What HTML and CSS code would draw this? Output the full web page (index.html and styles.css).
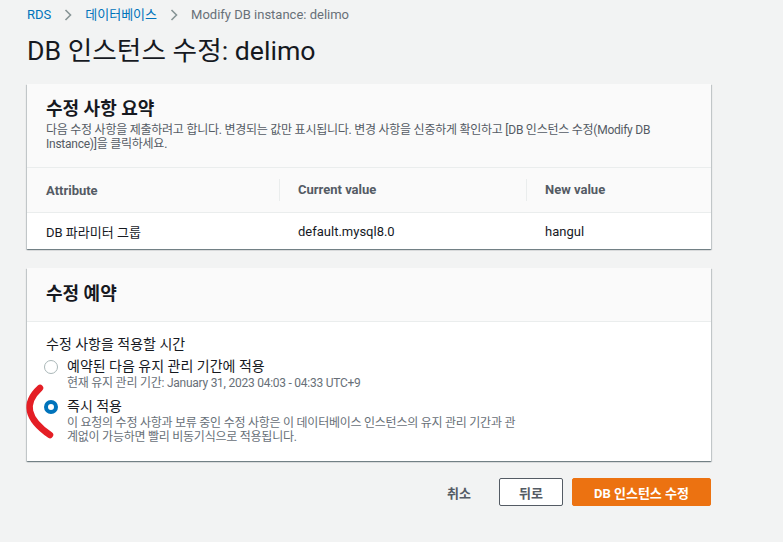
FILE: index.html
```html
<!DOCTYPE html>
<html lang="ko">
<head>
<meta charset="utf-8">
<title>Modify DB instance</title>
<link rel="stylesheet" href="styles.css">
</head>
<body>
<div class="page">
  <nav class="crumbs">
    <a class="crumb-link">RDS</a>
    <svg class="chev" width="8" height="12" viewBox="0 0 8 12"><path d="M1.5 1 L6.5 6 L1.5 11" fill="none" stroke="#879596" stroke-width="1.6"/></svg>
    <a class="crumb-link">데이터베이스</a>
    <svg class="chev" width="8" height="12" viewBox="0 0 8 12"><path d="M1.5 1 L6.5 6 L1.5 11" fill="none" stroke="#879596" stroke-width="1.6"/></svg>
    <span class="crumb-current">Modify DB instance: delimo</span>
  </nav>
  <h1 class="title">DB 인스턴스 수정: delimo</h1>

  <section class="card">
    <div class="card-head">
      <h2 class="card-title">수정 사항 요약</h2>
      <p class="card-desc">다음 수정 사항을 제출하려고 합니다. 변경되는 값만 표시됩니다. 변경 사항을 신중하게 확인하고 [DB 인스턴스 수정(Modify DB Instance)]을 클릭하세요.</p>
    </div>
    <div class="table">
      <div class="trow thead">
        <div class="cell">Attribute</div>
        <div class="cell sep">Current value</div>
        <div class="cell sep">New value</div>
      </div>
      <div class="trow tbody">
        <div class="cell">DB 파라미터 그룹</div>
        <div class="cell">default.mysql8.0</div>
        <div class="cell">hangul</div>
      </div>
    </div>
  </section>

  <section class="card card2">
    <div class="card-head head2">
      <h2 class="card-title">수정 예약</h2>
    </div>
    <div class="card-body">
      <div class="field-label">수정 사항을 적용할 시간</div>
      <div class="radio-row">
        <span class="radio"></span>
        <div class="radio-text">
          <div class="radio-label">예약된 다음 유지 관리 기간에 적용</div>
          <div class="radio-desc">현재 유지 관리 기간: January 31, 2023 04:03 - 04:33 UTC+9</div>
        </div>
      </div>
      <div class="radio-row second">
        <span class="radio checked"></span>
        <div class="radio-text">
          <div class="radio-label">즉시 적용</div>
          <div class="radio-desc narrow">이 요청의 수정 사항과 보류 중인 수정 사항은 이 데이터베이스 인스턴스의 유지 관리 기간과 관계없이 가능하면 빨리 비동기식으로 적용됩니다.</div>
        </div>
      </div>
    </div>
    <svg class="scribble" width="40" height="62" viewBox="0 0 40 62"><path d="M20 6 Q-5 29 30 53" fill="none" stroke="#e41e25" stroke-width="6.5" stroke-linecap="round"/></svg>
  </section>

  <div class="actions">
    <button class="btn-link">취소</button>
    <button class="btn-normal">뒤로</button>
    <button class="btn-primary">DB 인스턴스 수정</button>
  </div>
</div>
</body>
</html>
```

FILE: styles.css
```css
* { box-sizing: border-box; }
html, body { margin: 0; padding: 0; }
body {
  background: #f2f3f3;
  font-family: Roboto, "Noto Sans CJK KR", sans-serif;
  color: #16191f;
  width: 783px;
  height: 542px;
  overflow: hidden;
}
.page {
  padding: 6px 72px 0 27px;
}
.crumbs {
  display: flex;
  align-items: center;
  gap: 13px;
  font-size: 13px;
  line-height: 18px;
}
.crumb-link { color: #0073bb; }
.crumb-current { color: #687078; }
.chev { flex: none; }
.title {
  margin: 12px 0 0 0;
  font-size: 26.7px;
  line-height: 30px;
  font-weight: 400;
  color: #16191f;
}
.card {
  position: relative;
  margin-top: 18px;
  background: #fff;
  box-shadow: 0 1px 1px 0 rgba(0,28,36,.35), 1px 1px 1px 0 rgba(0,28,36,.15), -1px 1px 1px 0 rgba(0,28,36,.15);
}
.card2 { margin-top: 19px; }
.card-head {
  background: #fafafa;
  padding: 14px 20px 16px 19px;
  border-bottom: 1px solid #eaeded;
}
.head2 { padding: 15px 20px 16px 19px; }
.card-title {
  margin: 0;
  font-size: 18px;
  line-height: 22px;
  font-weight: 700;
}
.card-desc {
  margin: 3px 0 0 0;
  font-size: 12px;
  line-height: 14px;
  letter-spacing: -0.25px;
  color: #545b64;
  max-width: 640px;
}
.trow {
  display: grid;
  grid-template-columns: 252px 247px 1fr;
  align-items: center;
}
.thead {
  height: 45px;
  background: #fafafa;
  border-bottom: 1px solid #eaeded;
  font-size: 13px;
  font-weight: 700;
  color: #545b64;
}
.tbody {
  height: 36px;
  font-size: 13px;
  color: #16191f;
}
.cell { padding-left: 19px; }
.sep {
  border-left: 1px solid #eaeded;
  line-height: 22px;
  padding-left: 18px;
}
.card-body {
  padding: 12px 20px 17px 19px;
}
.field-label {
  font-size: 14px;
  line-height: 20px;
  margin-bottom: 2px;
}
.radio-row {
  display: flex;
  align-items: flex-start;
  gap: 9px;
  margin-left: -2px;
}
.radio-row.second { margin-top: 6px; }
.radio {
  flex: none;
  width: 14px;
  height: 14px;
  margin-top: 4px;
  border: 1.5px solid #aab7b8;
  border-radius: 50%;
  background: #fff;
}
.radio.checked {
  border: 4px solid #0073bb;
}
.radio-label {
  font-size: 14px;
  line-height: 20px;
}
.radio-desc {
  font-size: 12px;
  line-height: 14px;
  letter-spacing: -0.25px;
  color: #687078;
}
.radio-desc.narrow {
  max-width: 452px;
  word-break: break-all;
}
.scribble {
  position: absolute;
  left: -7px;
  top: 114px;
}
.actions {
  display: flex;
  justify-content: flex-end;
  align-items: center;
  margin-top: 17px;
}
.actions button {
  font-family: Roboto, "Noto Sans CJK KR", sans-serif;
  font-size: 13px;
  font-weight: 700;
  height: 28px;
  border-radius: 2px;
  cursor: pointer;
}
.btn-link {
  background: none;
  border: none;
  color: #545b64;
  padding: 0 20px;
  margin-right: 8px;
}
.btn-normal {
  width: 64px;
  background: #fff;
  border: 1px solid #545b64;
  color: #545b64;
  margin-right: 9px;
}
.btn-primary {
  width: 139px;
  background: #ec7211;
  border: 1px solid #ec7211;
  color: #fff;
}
```
